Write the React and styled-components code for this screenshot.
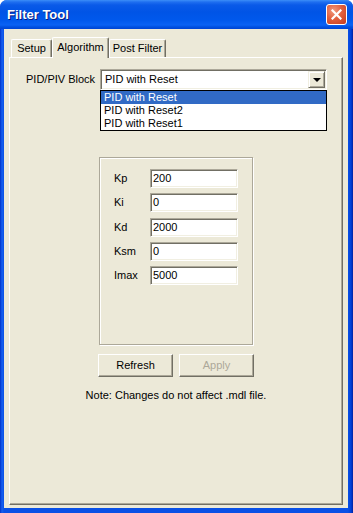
import React from "react";
import styled, { createGlobalStyle } from "styled-components";

const Global = createGlobalStyle`
  html, body { margin: 0; padding: 0; }
  body {
    width: 353px;
    height: 513px;
    overflow: hidden;
    background: #ffffff;
    font-family: "Liberation Sans", Arial, sans-serif;
    font-size: 11px;
    color: #000;
  }
`;

const Window = styled.div`
  width: 353px;
  height: 513px;
  box-sizing: border-box;
  display: flex;
  flex-direction: column;
  border-radius: 7px 7px 0 0;
  overflow: hidden;
  background: linear-gradient(to right, #0030c8 0px, #1660f0 2px, #0a50e6 4px, #0a50e6 calc(100% - 5px), #0040d8 calc(100% - 2px), #0020a0 100%);
`;

const TitleBar = styled.div`
  height: 29px;
  flex: 0 0 29px;
  display: flex;
  align-items: center;
  justify-content: space-between;
  padding: 0 6px 0 7px;
  background: linear-gradient(
    to bottom,
    #3c8ef8 0px,
    #1f6ff0 2px,
    #0a5ae8 5px,
    #0054e6 12px,
    #0058ec 20px,
    #0a62f4 25px,
    #0050e0 27px,
    #0044d4 29px
  );
`;

const Title = styled.span`
  font-family: "Liberation Sans", Arial, sans-serif;
  font-weight: bold;
  font-size: 13px;
  color: #ffffff;
  text-shadow: 1px 1px 0 #0a1a80;
  letter-spacing: 0;
`;

const CloseButton = styled.div`
  width: 21px;
  height: 21px;
  box-sizing: border-box;
  border: 1px solid #ffffff;
  border-radius: 3px;
  background: radial-gradient(circle at 35% 30%, #f09a7e 0%, #e2613f 45%, #c43a1c 100%);
  display: flex;
  align-items: center;
  justify-content: center;
`;

const Body = styled.div`
  flex: 1;
  margin: 0 5px 5px 4px;
  background: #ece9d8;
  padding: 8px 5px 3px 5px;
  display: flex;
  flex-direction: column;
  min-height: 0;
`;

const TabStrip = styled.div`
  display: flex;
  align-items: flex-end;
  height: 20px;
  padding-left: 2px;
  position: relative;
  z-index: 2;
`;

const Tab = styled.div`
  box-sizing: border-box;
  width: ${(p) => p.$w}px;
  height: ${(p) => (p.$active ? 21 : 18)}px;
  margin-bottom: ${(p) => (p.$active ? -1 : 0)}px;
  padding-top: ${(p) => (p.$active ? 3 : 2)}px;
  text-align: center;
  background: #ece9d8;
  border-top: 1px solid #ffffff;
  border-left: 1px solid #ffffff;
  border-right: 1px solid #716f64;
  box-shadow: inset -1px 0 0 #aca899;
  border-radius: 2px 2px 0 0;
  white-space: nowrap;
  line-height: 13px;
`;

const Panel = styled.div`
  flex: 1;
  box-sizing: border-box;
  border: 1px solid;
  border-color: #ffffff #716f64 #716f64 #ffffff;
  box-shadow: inset -1px -1px 0 #aca899;
  display: flex;
  flex-direction: column;
  padding-top: 11px;
  position: relative;
  z-index: 1;
`;

const ComboRow = styled.div`
  display: flex;
  align-items: center;
  padding-left: 16px;
  height: 21px;
`;

const FieldLabel = styled.span`
  width: ${(p) => p.$w}px;
  flex: 0 0 auto;
  line-height: 13px;
  white-space: nowrap;
`;

const Combo = styled.div`
  position: relative;
  width: 227px;
  height: 21px;
  box-sizing: border-box;
  background: #ffffff;
  border: 1px solid;
  border-color: #aca899 #ffffff #ffffff #aca899;
  box-shadow: inset 1px 1px 0 #716f64, inset -1px -1px 0 #f1efe2;
  display: flex;
  align-items: center;
  padding: 1px;
`;

const ComboText = styled.span`
  flex: 1;
  padding-left: 3px;
  line-height: 13px;
`;

const DropButton = styled.div`
  width: 17px;
  height: 17px;
  box-sizing: border-box;
  background: #ece9d8;
  border: 1px solid;
  border-color: #f1efe2 #716f64 #716f64 #f1efe2;
  box-shadow: inset 1px 1px 0 #ffffff, inset -1px -1px 0 #aca899;
  display: flex;
  align-items: center;
  justify-content: center;
  &::after {
    content: "";
    width: 0;
    height: 0;
    border-left: 4px solid transparent;
    border-right: 4px solid transparent;
    border-top: 4px solid #000;
    margin-top: 1px;
  }
`;

const DropList = styled.div`
  position: absolute;
  top: 20px;
  left: -1px;
  width: 227px;
  box-sizing: border-box;
  border: 1px solid #000000;
  background: #ffffff;
  z-index: 5;
`;

const DropItem = styled.div`
  height: 13px;
  line-height: 13px;
  padding-left: 3px;
  background: ${(p) => (p.$selected ? "#316ac5" : "#ffffff")};
  color: ${(p) => (p.$selected ? "#ffffff" : "#000000")};
  white-space: nowrap;
`;

const Center = styled.div`
  display: flex;
  flex-direction: column;
  align-items: center;
`;

const GroupBox = styled.div`
  margin-top: 67px;
  width: 154px;
  height: 188px;
  box-sizing: border-box;
  border: 1px solid #aca899;
  box-shadow: inset 1px 1px 0 #ffffff, 1px 1px 0 #ffffff;
  padding: 11px 0 0 14px;
  display: grid;
  grid-template-columns: 36px 88px;
  grid-auto-rows: 19px;
  row-gap: 5.25px;
  align-content: start;
  align-items: center;
`;

const TextInput = styled.div`
  width: 88px;
  height: 19px;
  box-sizing: border-box;
  background: #ffffff;
  border: 1px solid;
  border-color: #aca899 #ffffff #ffffff #aca899;
  box-shadow: inset 1px 1px 0 #716f64, inset -1px -1px 0 #f1efe2;
  padding: 2px 0 0 2px;
  line-height: 13px;
`;

const ButtonRow = styled.div`
  margin-top: 9px;
  display: flex;
  gap: 6px;
`;

const Button = styled.div`
  width: 75px;
  height: 23px;
  box-sizing: border-box;
  background: #ece9d8;
  border: 1px solid;
  border-color: #ffffff #716f64 #716f64 #ffffff;
  box-shadow: inset -1px -1px 0 #aca899;
  display: flex;
  align-items: center;
  justify-content: center;
  color: ${(p) => (p.$disabled ? "#aca899" : "#000000")};
  line-height: 13px;
`;

const Note = styled.div`
  margin-top: 12px;
  line-height: 13px;
  white-space: nowrap;
`;

const params = [
  ["Kp", "200"],
  ["Ki", "0"],
  ["Kd", "2000"],
  ["Ksm", "0"],
  ["Imax", "5000"],
];

const tabs = [
  { label: "Setup", w: 41 },
  { label: "Algorithm", w: 57, active: true },
  { label: "Post Filter", w: 57 },
];

const options = ["PID with Reset", "PID with Reset2", "PID with Reset1"];

export default function App() {
  return (
    <>
      <Global />
      <Window>
        <TitleBar>
          <Title>Filter Tool</Title>
          <CloseButton>
            <svg width="11" height="11" viewBox="0 0 11 11">
              <path d="M1.5 1.5 L9.5 9.5 M9.5 1.5 L1.5 9.5" stroke="#ffffff" strokeWidth="2.2" strokeLinecap="square" />
            </svg>
          </CloseButton>
        </TitleBar>
        <Body>
          <TabStrip>
            {tabs.map((t) => (
              <Tab key={t.label} $w={t.w} $active={t.active}>
                {t.label}
              </Tab>
            ))}
          </TabStrip>
          <Panel>
            <ComboRow>
              <FieldLabel $w={74}>PID/PIV Block</FieldLabel>
              <Combo>
                <ComboText>PID with Reset</ComboText>
                <DropButton />
                <DropList>
                  {options.map((o, i) => (
                    <DropItem key={o} $selected={i === 0}>
                      {o}
                    </DropItem>
                  ))}
                </DropList>
              </Combo>
            </ComboRow>
            <Center>
              <GroupBox>
                {params.map(([k, v]) => (
                  <React.Fragment key={k}>
                    <FieldLabel $w={36}>{k}</FieldLabel>
                    <TextInput>{v}</TextInput>
                  </React.Fragment>
                ))}
              </GroupBox>
              <ButtonRow>
                <Button>Refresh</Button>
                <Button $disabled>Apply</Button>
              </ButtonRow>
              <Note>Note: Changes do not affect .mdl file.</Note>
            </Center>
          </Panel>
        </Body>
      </Window>
    </>
  );
}
